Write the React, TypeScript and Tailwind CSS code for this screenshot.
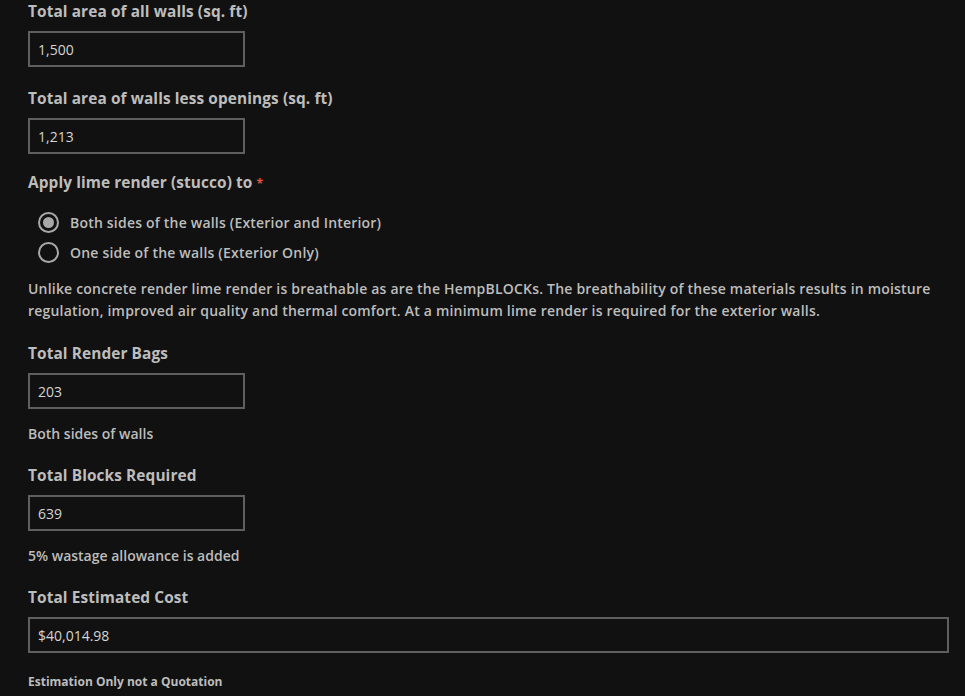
import { useState } from 'react';

type FieldProps = {
    label: string;
    value: string;
    wide?: boolean;
    note?: string;
};

function Field({ label, value, wide, note }: FieldProps) {
    return (
        <div className="flex flex-col">
            <label className="text-[15.4px] font-bold leading-[24px] tracking-[0.1px] text-[#bdbdbd]">{label}</label>
            <input
                readOnly
                value={value}
                className={`mt-[7px] h-[36px] border-2 border-[#5f5f5f] bg-[#111111] px-[8px] text-[14px] font-medium text-[#d4d4d4] outline-none ${wide ? 'w-full' : 'w-[217px]'}`}
            />
            {note && (
                <p className="mt-[14px] text-[14px] font-semibold leading-[22px] text-[#bdbdbd]">{note}</p>
            )}
        </div>
    );
}

export default function App() {
    const [side, setSide] = useState('both');

    const options = [
        { id: 'both', label: 'Both sides of the walls (Exterior and Interior)' },
        { id: 'one', label: 'One side of the walls (Exterior Only)' },
    ];

    return (
        <div
            className="min-h-[696px] w-[965px] bg-[#111111] pl-[28px] pr-[16px]"
            style={{ fontFamily: '"Open Sans", "Noto Sans", sans-serif' }}
        >
            <div className="flex flex-col">
                <Field label="Total area of all walls (sq. ft)" value="1,500" />

                <div className="mt-[20px]">
                    <Field label="Total area of walls less openings (sq. ft)" value="1,213" />
                </div>

                {/* Radio group */}
                <div className="mt-[17px] flex flex-col">
                    <div className="text-[15.4px] font-bold leading-[24px] tracking-[0.1px] text-[#bdbdbd]">
                        Apply lime render (stucco) to <span className="text-[12px] text-[#e5533d]">*</span>
                    </div>
                    <div className="mt-[16px] flex flex-col gap-[10px] pl-[10px]">
                        {options.map((opt) => (
                            <label
                                key={opt.id}
                                className="flex h-[20px] cursor-pointer items-center gap-[11px]"
                                onClick={() => setSide(opt.id)}
                            >
                                <span className="flex h-[21px] w-[21px] items-center justify-center rounded-full border-2 border-[#a8a8a8]">
                                    {side === opt.id && (
                                        <span className="h-[11px] w-[11px] rounded-full bg-[#a8a8a8]" />
                                    )}
                                </span>
                                <span className="text-[14px] font-semibold tracking-[0.2px] text-[#bdbdbd]">{opt.label}</span>
                            </label>
                        ))}
                    </div>
                    <p className="mt-[16px] text-[14px] font-semibold leading-[22px] tracking-[0.2px] text-[#bdbdbd]">
                        Unlike concrete render lime render is breathable as are the HempBLOCKs. The breathability of these materials results in moisture regulation, improved air quality and thermal comfort. At a minimum lime render is required for the exterior walls.
                    </p>
                </div>

                <div className="mt-[20px]">
                    <Field label="Total Render Bags" value="203" note="Both sides of walls" />
                </div>

                <div className="mt-[19px]">
                    <Field label="Total Blocks Required" value="639" note="5% wastage allowance is added" />
                </div>

                <div className="mt-[19px]">
                    <Field label="Total Estimated Cost" value="$40,014.98" wide />
                </div>

                <p className="mt-[20px] text-[12px] font-bold leading-[18px] text-[#bdbdbd]">
                    Estimation Only not a Quotation
                </p>
            </div>
        </div>
    );
}
